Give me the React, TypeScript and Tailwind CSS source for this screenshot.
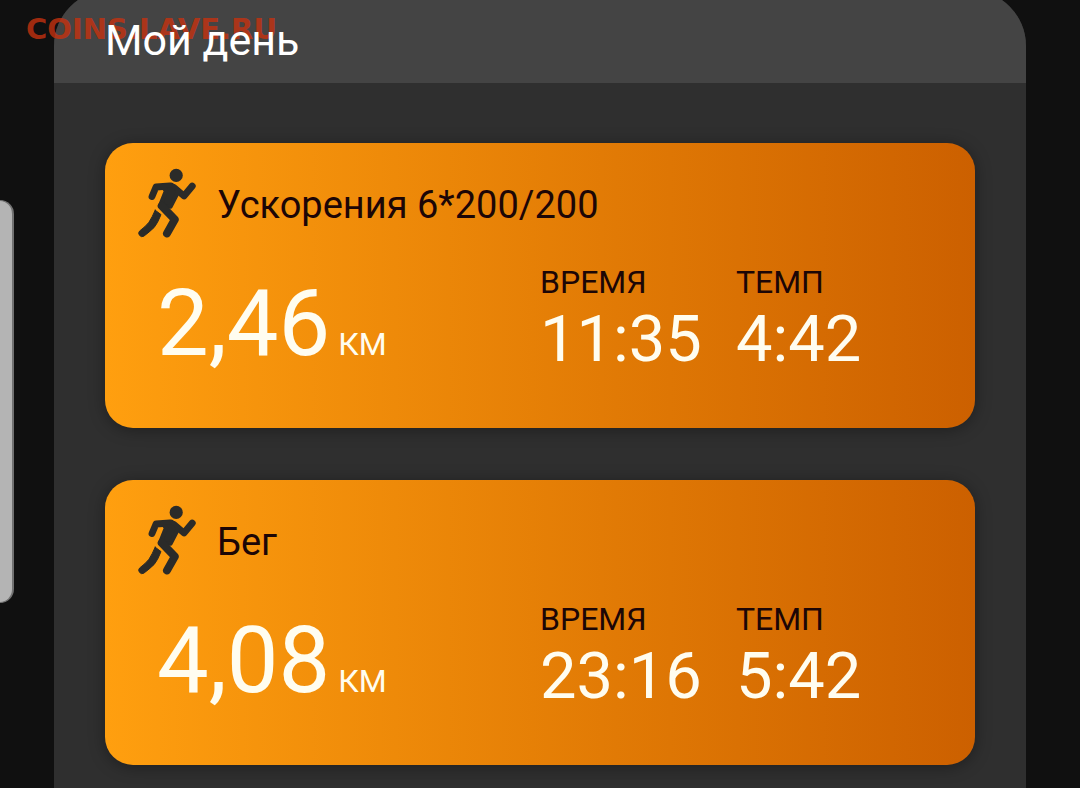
interface Workout {
  title: string;
  distance: string;
  time: string;
  pace: string;
}

const workouts: Workout[] = [
  { title: 'Ускорения 6*200/200', distance: '2,46', time: '11:35', pace: '4:42' },
  { title: 'Бег', distance: '4,08', time: '23:16', pace: '5:42' },
];

function RunnerIcon() {
  return (
    <svg viewBox="0 0 58 70" className="h-[70px] w-[58px] shrink-0 text-[#2b2b29]" fill="none" stroke="currentColor" strokeLinecap="round" strokeLinejoin="round" aria-hidden="true">
      <circle cx="38.2" cy="7.4" r="6.6" fill="currentColor" stroke="none" />
      <path d="M14 28.5 L18 19 L32 18" strokeWidth="6.8" />
      <path d="M36 19.5 L46 28 L54.3 18" strokeWidth="6.8" />
      <path d="M25 18 L34 17 L40.5 23 L32.5 38.5 L22 38 L28 23 Z" fill="currentColor" strokeWidth="4.4" />
      <path d="M23.8 38 L36.8 51.5 L29 65.4" strokeWidth="8" />
      <path d="M17.2 42.2 L23 46.6 Q19.6 55.4 16.2 59.4 Q11 64.4 5.8 68.2 A3.4 3.4 0 0 1 1.6 63 Q8 58.2 11 54.2 Q14.2 49.2 17.2 42.2 Z" fill="currentColor" strokeWidth="1" />
    </svg>
  );
}

function Metric({ label, value }: { label: string; value: string }) {
  return (
    <div>
      <dt className="text-[32px] leading-[36px] text-[#1c0606]">{label}</dt>
      <dd className="text-[65px] leading-[78px] text-[#fffdf0]">{value}</dd>
    </div>
  );
}

function WorkoutCard({ workout }: { workout: Workout }) {
  return (
    <article className="h-[285px] rounded-[28px] bg-linear-to-r from-[#ff9f0f] to-[#cc6000] pt-[25px] pl-[33px] shadow-[0_2px_16px_rgba(0,0,0,0.35)]">
      <header className="flex items-center gap-[21px]">
        <RunnerIcon />
        <h2 className="pt-1 text-[38px] leading-[48px] text-[#1c0606]">{workout.title}</h2>
      </header>
      <div className="mt-[26px] flex pl-[19px]">
        <p className="w-[383px] pt-2.5 text-[#fffdf0]">
          <span className="text-[92px] leading-[100px]">{workout.distance}</span>
          <span className="ml-2 text-[32px]">КМ</span>
        </p>
        <dl className="flex gap-[34px]">
          <Metric label="ВРЕМЯ" value={workout.time} />
          <Metric label="ТЕМП" value={workout.pace} />
        </dl>
      </div>
    </article>
  );
}

export default function App() {
  return (
    <div className="relative flex min-h-screen flex-col overflow-hidden bg-[#101010] font-['Roboto',sans-serif]">
      <main className="mx-[5%] -mt-2.5 flex-1 overflow-hidden rounded-t-[56px] bg-[#2f2f2f]">
        <header className="bg-[#444444] px-[51px] pt-6 pb-[17px]">
          <h1 className="relative z-10 text-[43px] leading-[52px] text-white">Мой день</h1>
        </header>
        <section className="flex flex-col gap-[52px] px-[51px] pt-[60px] pb-[23px]">
          {workouts.map((workout) => (
            <WorkoutCard key={workout.title} workout={workout} />
          ))}
        </section>
      </main>

      {/* edge panel handle */}
      <div className="absolute top-[200px] left-0 h-[403px] w-3.5 rounded-r-2xl border-y border-r-2 border-[#727272] bg-[#b4b4b4]" />
      <span className="absolute top-[13px] left-[26px] font-['DejaVu_Sans',sans-serif] text-[29px] leading-8 font-bold text-[#c8320f]/80">
        COINS.LAVE.RU
      </span>
    </div>
  );
}
